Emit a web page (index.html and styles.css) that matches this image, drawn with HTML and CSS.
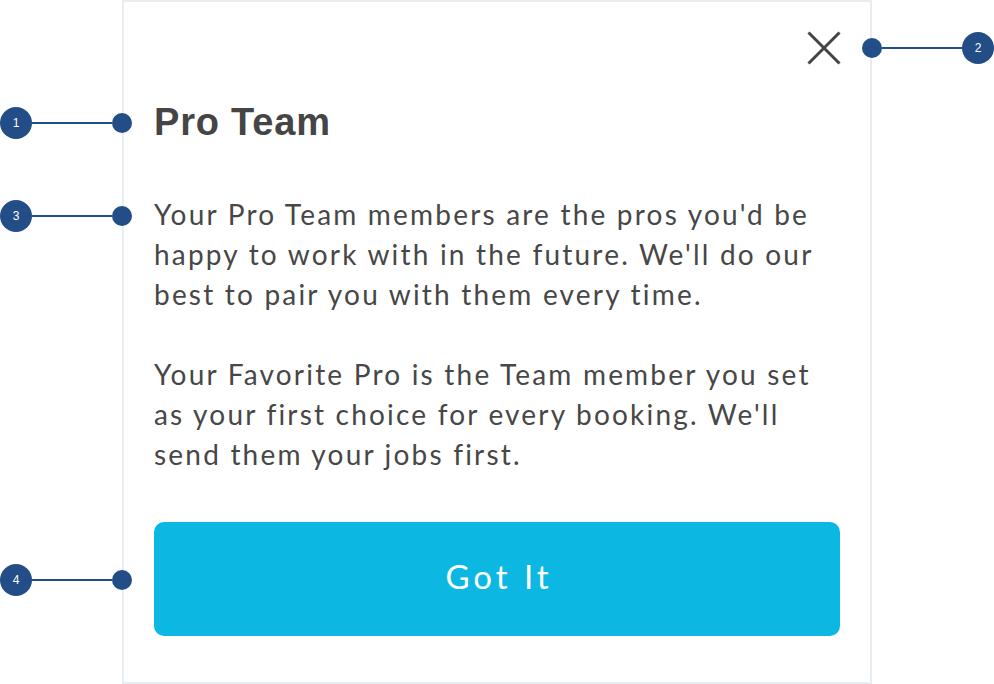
FILE: index.html
```html
<!DOCTYPE html>
<html lang="en">
<head>
<meta charset="utf-8">
<title>Pro Team</title>
<link rel="stylesheet" href="styles.css">
</head>
<body>
<main class="card">
  <div class="card-top">
    <button class="close" aria-label="Close">
      <svg width="34" height="34" viewBox="0 0 34 34" aria-hidden="true">
        <path d="M1.5 1.5 L32.5 32.5 M32.5 1.5 L1.5 32.5" stroke="#444444" stroke-width="3" fill="none"/>
      </svg>
    </button>
  </div>
  <h1 class="title">Pro Team</h1>
  <p class="text">Your Pro Team members are the pros you'd be happy to work with in the future. We'll do our best to pair you with them every time.</p>
  <p class="text text-second">Your Favorite Pro is the Team member you set as your first choice for every booking. We'll send them your jobs first.</p>
  <button class="cta">Got It</button>
</main>

<div class="callout callout-1"><span class="badge">1</span><span class="line"></span><span class="dot"></span></div>
<div class="callout callout-2 callout-right"><span class="badge">2</span><span class="line"></span><span class="dot"></span></div>
<div class="callout callout-3"><span class="badge">3</span><span class="line"></span><span class="dot"></span></div>
<div class="callout callout-4"><span class="badge">4</span><span class="line"></span><span class="dot"></span></div>
</body>
</html>
```
FILE: styles.css
```css
html, body {
  margin: 0;
  padding: 0;
  background: #ffffff;
}

body {
  position: relative;
  width: 994px;
  height: 684px;
  overflow: hidden;
  font-family: "Lato", "Liberation Sans", sans-serif;
}

.card {
  box-sizing: border-box;
  margin-left: 122px;
  width: 750px;
  height: 684px;
  border: 2px solid #e7edf0;
  padding: 30px 30px 46px;
  display: flex;
  flex-direction: column;
}

.card-top {
  display: flex;
  justify-content: flex-end;
  height: 34px;
}

.close {
  border: 0;
  padding: 0;
  margin: -1px -1px 0 0;
  background: none;
  width: 34px;
  height: 34px;
  cursor: pointer;
}

.close svg {
  display: block;
}

.title {
  margin: 33px 0 0;
  font-family: "Liberation Sans", Arial, sans-serif;
  font-weight: 700;
  font-size: 38px;
  line-height: 46px;
  letter-spacing: 0.8px;
  color: #454545;
}

.text {
  margin: 49px 0 0;
  font-size: 28px;
  line-height: 40px;
  letter-spacing: 2.2px;
  color: #474747;
}

.text-second {
  margin-top: 40px;
}

.cta {
  margin-top: 48px;
  height: 114px;
  border: 0;
  border-radius: 10px;
  background: #0cb8e2;
  color: #ffffff;
  font-family: "Lato", "Liberation Sans", sans-serif;
  font-size: 33px;
  letter-spacing: 4px;
  padding: 0 0 6px 4px;
  cursor: pointer;
}

.callout {
  position: absolute;
  left: 0;
  width: 132px;
  height: 32px;
  display: flex;
  align-items: center;
}

.callout-right {
  left: 862px;
  flex-direction: row-reverse;
}

.callout-1 { top: 107px; }
.callout-2 { top: 32px; }
.callout-3 { top: 200px; }
.callout-4 { top: 564px; }

.badge {
  flex: none;
  width: 32px;
  height: 32px;
  border-radius: 50%;
  background: #234d86;
  color: #ffffff;
  font-family: "Liberation Sans", Arial, sans-serif;
  font-size: 12px;
  display: flex;
  align-items: center;
  justify-content: center;
}

.line {
  flex: 1;
  height: 2px;
  background: #234d86;
}

.dot {
  flex: none;
  width: 20px;
  height: 20px;
  border-radius: 50%;
  background: #234d86;
}
```
